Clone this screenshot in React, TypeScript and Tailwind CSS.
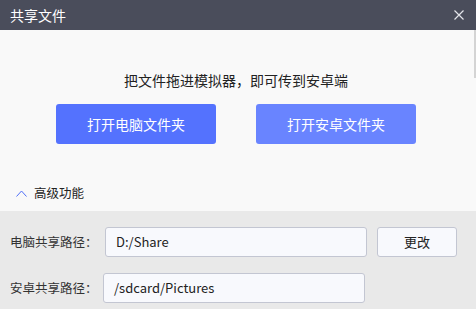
import React from 'react';

const font = { fontFamily: '"Noto Sans CJK SC", "Noto Sans", sans-serif' };

export default function App() {
  return (
    <div
      className="relative w-[476px] h-[309px] overflow-hidden bg-[#f9f9f9] text-[#222]"
      style={font}
    >
      {/* Title bar */}
      <div className="h-[30px] bg-[#4a4d5b] flex items-center justify-between pl-[10px] pr-[12px]">
        <span className="text-[14px] leading-none text-white">共享文件</span>
        <svg width="10" height="10" viewBox="0 0 10 10" className="text-[#e4e5ea]">
          <path d="M0.5 0.5 L9.5 9.5 M9.5 0.5 L0.5 9.5" stroke="currentColor" strokeWidth="1.2" fill="none" />
        </svg>
      </div>

      {/* Scrollbar thumb */}
      <div className="absolute right-0 top-[30px] w-[2px] h-[48px] bg-[#d4d4d4]" />

      {/* Top section */}
      <div className="h-[181px] pr-[4px] pt-[40px] flex flex-col">
        <p className="text-center text-[14px] leading-[20px]">把文件拖进模拟器，即可传到安卓端</p>
        <div className="mt-[14px] flex justify-center gap-[40px]">
          <button className="w-[160px] h-[40px] rounded-[3px] bg-[#5472fe] text-white text-[14px]">
            打开电脑文件夹
          </button>
          <button className="w-[160px] h-[40px] rounded-[3px] bg-[#6984ff] text-white text-[14px]">
            打开安卓文件夹
          </button>
        </div>
        <div className="mt-[41px] pl-[16px] flex items-center gap-[7px] h-[16px]">
          <svg width="11" height="7" viewBox="0 0 11 7">
            <path d="M0.5 6.5 L5.5 1 L10.5 6.5" stroke="#4f6ef7" strokeWidth="1" fill="none" />
          </svg>
          <span className="text-[12.5px] leading-none">高级功能</span>
        </div>
      </div>

      {/* Advanced section */}
      <div className="h-[98px] bg-[#e9e9e9] pt-[16px] pl-[10px] flex flex-col gap-[16px]">
        <div className="flex items-center h-[30px]">
          <span className="w-[95px] text-[12.5px] text-[#333]">电脑共享路径：</span>
          <div className="w-[262px] h-[30px] rounded-[3px] border border-[#c3c6d2] bg-[#f8f9fd] pl-[10px] flex items-center text-[13px] text-[#222]">
            D:/Share
          </div>
          <button className="ml-[10px] w-[80px] h-[30px] rounded-[3px] border border-[#c3c6d2] bg-[#f8f9fd] text-[13px] text-[#222]">
            更改
          </button>
        </div>
        <div className="flex items-center h-[30px]">
          <span className="w-[93px] text-[12.5px] text-[#333]">安卓共享路径：</span>
          <div className="w-[262px] h-[30px] rounded-[3px] border border-[#c3c6d2] bg-[#f8f9fd] pl-[10px] flex items-center text-[13px] text-[#222]">
            /sdcard/Pictures
          </div>
        </div>
      </div>
    </div>
  );
}
